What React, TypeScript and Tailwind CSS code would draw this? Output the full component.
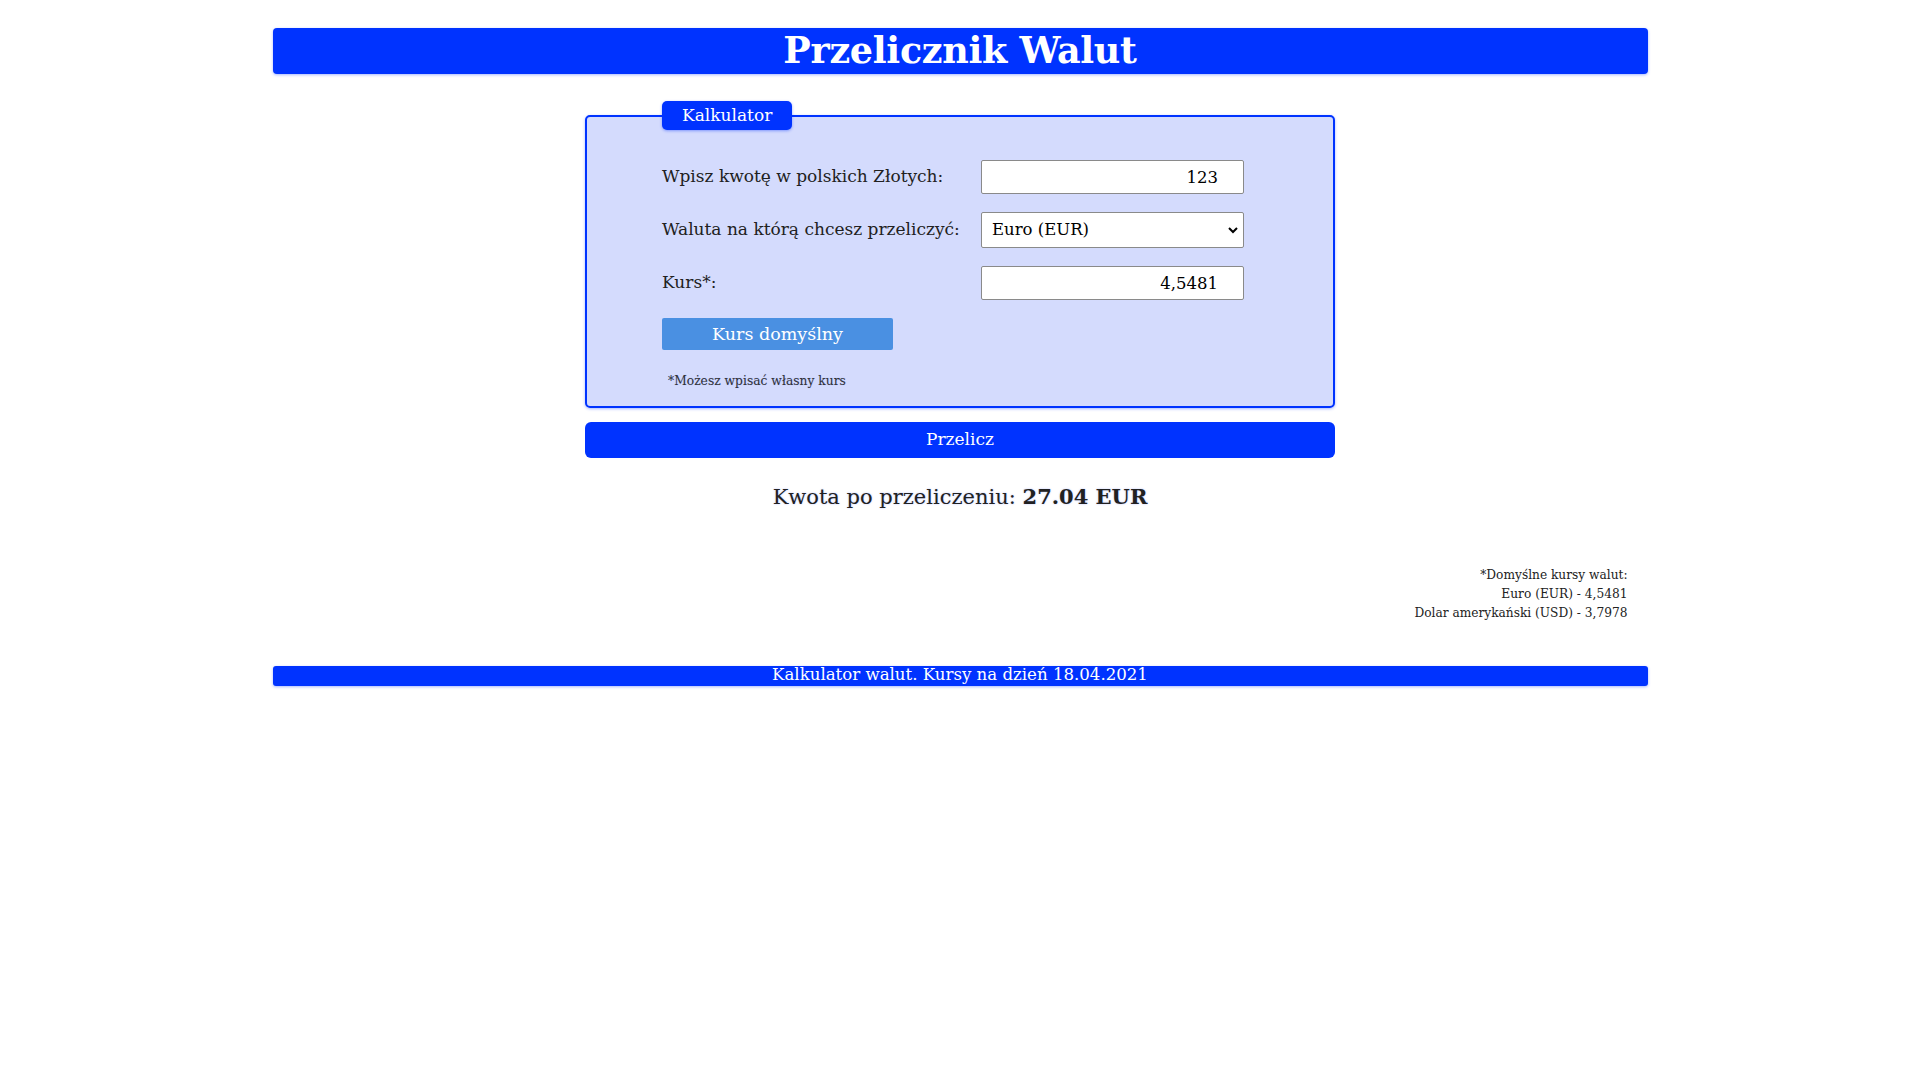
import React, { useState } from "react";

const rates: Record<string, { label: string; rate: string }> = {
  EUR: { label: "Euro (EUR)", rate: "4,5481" },
  USD: { label: "Dolar amerykański (USD)", rate: "3,7978" },
};

const App: React.FC = () => {
  const [amount, setAmount] = useState<string>("123");
  const [currency, setCurrency] = useState<string>("EUR");
  const [rate, setRate] = useState<string>(rates.EUR.rate);
  const [result, setResult] = useState<string>("27.04");

  const calculate = () => {
    const value = parseFloat(amount.replace(",", ".")) / parseFloat(rate.replace(",", "."));
    setResult(isNaN(value) ? "0.00" : value.toFixed(2));
  };

  return (
    <div className="min-h-screen bg-white pt-[28px] font-['DejaVu_Serif',serif] text-[#212121]">
      {/* Header */}
      <header className="mx-auto w-[1375px] h-[46px] flex items-center justify-center rounded-[4px] bg-[#0033ff] shadow-[0_1px_3px_rgba(0,51,255,0.35)]">
        <h1 className="text-[36.5px] font-bold leading-none text-white tracking-[-0.3px]">
          Przelicznik Walut
        </h1>
      </header>

      <main className="mx-auto w-[750px] mt-[27px]">
        <fieldset className="rounded-[5px] border-2 border-[#0033ff] bg-[#d4dbfd] px-0 pb-[16px] shadow-[0_1px_3px_rgba(0,51,255,0.35)]">
          <legend className="ml-[75px] h-[29px] px-[20px] flex items-center rounded-[5px] bg-[#0033ff] text-[17px] text-white shadow-[0_1px_3px_rgba(0,51,255,0.4)]">
            Kalkulator
          </legend>

          <div className="pl-[75px] pt-[30px] flex flex-col gap-[18px]">
            <div className="flex items-center">
              <label htmlFor="amount" className="w-[319px] text-[17px]">
                Wpisz kwotę w polskich Złotych:
              </label>
              <input
                id="amount"
                type="text"
                value={amount}
                onChange={(e) => setAmount(e.target.value)}
                className="w-[263px] h-[34px] rounded-[2px] border border-[#8a8a8a] bg-white pr-[25px] text-right text-[16.5px] text-black outline-none"
              />
            </div>

            <div className="flex items-center">
              <label htmlFor="currency" className="w-[319px] text-[17px]">
                Waluta na którą chcesz przeliczyć:
              </label>
              <div className="relative">
                <select
                  id="currency"
                  value={currency}
                  onChange={(e) => {
                    setCurrency(e.target.value);
                    setRate(rates[e.target.value].rate);
                  }}
                  className="w-[263px] h-[36px] appearance-none rounded-[2px] border border-[#8a8a8a] bg-white pl-[10px] text-[16.5px] text-black outline-none"
                >
                  <option value="EUR">Euro (EUR)</option>
                  <option value="USD">Dolar amerykański (USD)</option>
                </select>
                <svg
                  className="pointer-events-none absolute right-[5px] top-[13px]"
                  width="12"
                  height="10"
                  viewBox="0 0 12 10"
                >
                  <path d="M2 3 L6 7 L10 3" fill="none" stroke="#000" strokeWidth="2" />
                </svg>
              </div>
            </div>

            <div className="flex items-center">
              <label htmlFor="rate" className="w-[319px] text-[17px]">
                Kurs*:
              </label>
              <input
                id="rate"
                type="text"
                value={rate}
                onChange={(e) => setRate(e.target.value)}
                className="w-[263px] h-[34px] rounded-[2px] border border-[#8a8a8a] bg-white pr-[25px] text-right text-[16.5px] text-black outline-none"
              />
            </div>

            <div>
              <button
                type="button"
                onClick={() => setRate(rates[currency].rate)}
                className="w-[231px] h-[32px] rounded-[2px] bg-[#4a90e2] text-[17.5px] text-white"
              >
                Kurs domyślny
              </button>
            </div>

            <p className="pl-[6px] mt-[4px] text-[12.3px] leading-[18px] text-[#333] [text-shadow:0_0_1px_rgba(0,51,255,0.25)]">
              *Możesz wpisać własny kurs
            </p>
          </div>
        </fieldset>

        <button
          type="button"
          onClick={calculate}
          className="mt-[14px] w-[750px] h-[36px] rounded-[6px] bg-[#0033ff] text-[17px] text-white"
        >
          Przelicz
        </button>

        <p className="mt-[23px] text-center text-[21px] [text-shadow:0_0_2px_rgba(0,51,255,0.3)]">
          Kwota po przeliczeniu: <span className="font-bold">{result} {currency}</span>
        </p>
      </main>

      {/* Default rates */}
      <div className="mx-auto w-[1375px] mt-[52px] pr-[20px] text-right text-[12.2px] leading-[19px] text-[#222]">
        <p>*Domyślne kursy walut:</p>
        <p>Euro (EUR) - 4,5481</p>
        <p>Dolar amerykański (USD) - 3,7978</p>
      </div>

      {/* Footer */}
      <footer className="mx-auto mt-[43px] w-[1375px] h-[20px] flex items-center justify-center rounded-[3px] bg-[#0033ff] shadow-[0_1px_3px_rgba(0,51,255,0.35)]">
        <span className="text-[16.6px] leading-none text-white">
          Kalkulator walut. Kursy na dzień 18.04.2021
        </span>
      </footer>
    </div>
  );
};

export default App;
